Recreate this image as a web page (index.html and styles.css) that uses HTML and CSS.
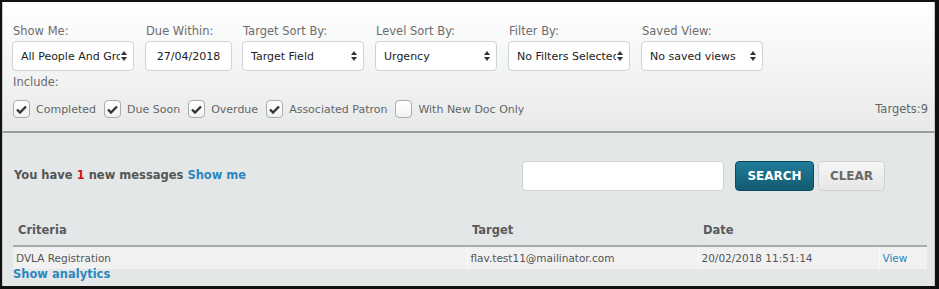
FILE: index.html
```html
<!DOCTYPE html>
<html>
<head>
<meta charset="utf-8">
<link rel="stylesheet" href="styles.css">
</head>
<body>
<div class="frame">
  <div class="filters">
    <div class="fields">
      <div class="field">
        <div class="label">Show Me:</div>
        <div class="select"><span class="val">All People And Groups</span><svg class="arrows" width="6" height="10" viewBox="0 0 6 10"><path d="M3 0 L6 4 L0 4 Z M3 10 L6 6 L0 6 Z" fill="#333"/></svg></div>
      </div>
      <div class="field">
        <div class="label">Due Within:</div>
        <div class="date">27/04/2018</div>
      </div>
      <div class="field">
        <div class="label">Target Sort By:</div>
        <div class="select"><span class="val">Target Field</span><svg class="arrows" width="6" height="10" viewBox="0 0 6 10"><path d="M3 0 L6 4 L0 4 Z M3 10 L6 6 L0 6 Z" fill="#333"/></svg></div>
      </div>
      <div class="field">
        <div class="label">Level Sort By:</div>
        <div class="select"><span class="val">Urgency</span><svg class="arrows" width="6" height="10" viewBox="0 0 6 10"><path d="M3 0 L6 4 L0 4 Z M3 10 L6 6 L0 6 Z" fill="#333"/></svg></div>
      </div>
      <div class="field">
        <div class="label">Filter By:</div>
        <div class="select"><span class="val">No Filters Selected</span><svg class="arrows" width="6" height="10" viewBox="0 0 6 10"><path d="M3 0 L6 4 L0 4 Z M3 10 L6 6 L0 6 Z" fill="#333"/></svg></div>
      </div>
      <div class="field">
        <div class="label">Saved View:</div>
        <div class="select"><span class="val">No saved views</span><svg class="arrows" width="6" height="10" viewBox="0 0 6 10"><path d="M3 0 L6 4 L0 4 Z M3 10 L6 6 L0 6 Z" fill="#333"/></svg></div>
      </div>
    </div>
    <div class="label include">Include:</div>
    <div class="checks">
      <label class="check"><span class="box"><svg width="11" height="9" viewBox="0 0 11 9"><path d="M1 4.5 L4 7.5 L10 1.5" fill="none" stroke="#333" stroke-width="2.4"/></svg></span>Completed</label>
      <label class="check"><span class="box"><svg width="11" height="9" viewBox="0 0 11 9"><path d="M1 4.5 L4 7.5 L10 1.5" fill="none" stroke="#333" stroke-width="2.4"/></svg></span>Due Soon</label>
      <label class="check"><span class="box"><svg width="11" height="9" viewBox="0 0 11 9"><path d="M1 4.5 L4 7.5 L10 1.5" fill="none" stroke="#333" stroke-width="2.4"/></svg></span>Overdue</label>
      <label class="check"><span class="box"><svg width="11" height="9" viewBox="0 0 11 9"><path d="M1 4.5 L4 7.5 L10 1.5" fill="none" stroke="#333" stroke-width="2.4"/></svg></span>Associated Patron</label>
      <label class="check"><span class="box"></span>With New Doc Only</label>
      <span class="targets">Targets:9</span>
    </div>
  </div>
  <div class="results">
    <div class="msgrow">
      <div class="msg">You have <span class="red">1</span> new messages <a class="link">Show me</a></div>
      <div class="search">
        <div class="searchbox"></div>
        <button class="btn primary">SEARCH</button>
        <button class="btn plain">CLEAR</button>
      </div>
    </div>
    <table class="grid">
      <thead>
        <tr><th class="c1">Criteria</th><th class="c2">Target</th><th class="c3">Date</th><th class="c4"></th></tr>
      </thead>
      <tbody>
        <tr><td>DVLA Registration</td><td>flav.test11@mailinator.com</td><td>20/02/2018 11:51:14</td><td><a class="view">View</a></td></tr>
      </tbody>
    </table>
    <a class="link analytics">Show analytics</a>
  </div>
</div>
</body>
</html>
```

FILE: styles.css
```css
html, body {
  margin: 0;
  padding: 0;
  background: #fff;
}
body {
  font-family: "DejaVu Sans", Verdana, sans-serif;
  width: 939px;
  height: 289px;
  overflow: hidden;
}
.frame {
  box-sizing: border-box;
  width: 939px;
  height: 289px;
  border-top: 2px solid #111;
  border-left: 2px solid #111;
  border-right: 4px solid #111;
  border-bottom: 3px solid #111;
  display: flex;
  flex-direction: column;
  background: #e4e7e7;
}
.filters {
  height: 131px;
  flex: none;
  box-sizing: border-box;
  padding: 21px 0 0 9px;
  background: linear-gradient(#ffffff, #e8eaea);
  border-bottom: 2px solid #9a9c9c;
  border-left: 1px solid #c8c8c8;
  border-right: 1px solid #c8c8c8;
}
.fields {
  display: flex;
  gap: 11px;
}
.field {
  display: flex;
  flex-direction: column;
}
.label {
  font-size: 11.5px;
  line-height: 16px;
  color: #6d6d6d;
  padding-left: 1px;
  margin-bottom: 2px;
}
.select, .date {
  box-sizing: border-box;
  height: 30px;
  border: 1px solid #cdd3d6;
  border-radius: 4px;
  background: #fff;
  font-size: 11px;
  color: #222;
  display: flex;
  align-items: center;
}
.select {
  width: 122px;
  padding: 0 6px 0 8px;
}
.select .val {
  flex: 1;
  overflow: hidden;
  white-space: nowrap;
}
.select .arrows {
  flex: none;
  margin-left: 1px;
}
.date {
  width: 87px;
  justify-content: center;
  margin-right: -1px;
}
.include {
  margin-top: 3px;
}
.checks {
  display: flex;
  align-items: center;
  margin-top: 10px;
  padding-right: 6px;
}
.check {
  display: flex;
  align-items: center;
  font-size: 11px;
  color: #666;
  margin-right: 7px;
  padding-left: 1px;
}
.box {
  box-sizing: border-box;
  width: 17px;
  height: 18px;
  border: 1px solid #a9adb0;
  border-radius: 4px;
  background: linear-gradient(#ffffff, #f2f2f2);
  display: flex;
  align-items: center;
  justify-content: center;
  margin-right: 6px;
}
.targets {
  margin-left: auto;
  font-size: 11.5px;
  color: #666;
}
.results {
  flex: 1;
  padding: 28px 0 0 10px;
  border-left: 1px solid #c8c8c8;
  border-right: 1px solid #c8c8c8;
}
.msgrow {
  display: flex;
  align-items: center;
  justify-content: space-between;
  padding-right: 49px;
}
.msg {
  font-size: 11.5px;
  font-weight: bold;
  color: #555;
  padding-left: 1px;
  margin-top: -3px;
}
.red {
  color: #d0141a;
}
.link {
  color: #2b87be;
  font-weight: bold;
}
.search {
  display: flex;
  align-items: center;
}
.searchbox {
  box-sizing: border-box;
  width: 202px;
  height: 30px;
  background: #fff;
  border: 1px solid #cdd3d6;
  border-radius: 4px;
  margin-right: 11px;
}
.btn {
  box-sizing: border-box;
  height: 30px;
  border-radius: 4px;
  font-family: "DejaVu Sans", Verdana, sans-serif;
  font-size: 12px;
  font-weight: bold;
  padding: 0;
}
.primary {
  width: 79px;
  color: #fff;
  background: linear-gradient(#1f7c98, #135b72);
  border: 1px solid #0f4b5f;
  margin-right: 4px;
}
.plain {
  width: 67px;
  color: #6a6a6a;
  background: linear-gradient(#f6f6f6, #e6e6e6);
  border: 1px solid #cfd3d3;
}
.grid {
  width: 914px;
  border-collapse: collapse;
  margin-top: 30px;
  font-size: 10.5px;
  color: #555;
}
.grid th {
  text-align: left;
  font-size: 11.5px;
  font-weight: bold;
  color: #5a5a5a;
  line-height: 16px;
  padding: 1px 5px 7px;
  border-bottom: 2px solid #a9abab;
}
.c1 { width: 444px; }
.c2 { width: 221px; }
.c3 { width: 171px; }
.grid td {
  background: #f1f1f1;
  height: 22px;
  padding: 0 3px;
  line-height: 14px;
  border-left: 1px solid #fafafa;
}
.grid td:first-child {
  border-left: none;
}
.view {
  color: #2b87be;
}
.analytics {
  display: block;
  font-size: 11.5px;
  line-height: 12px;
  margin-top: -1px;
}
```
